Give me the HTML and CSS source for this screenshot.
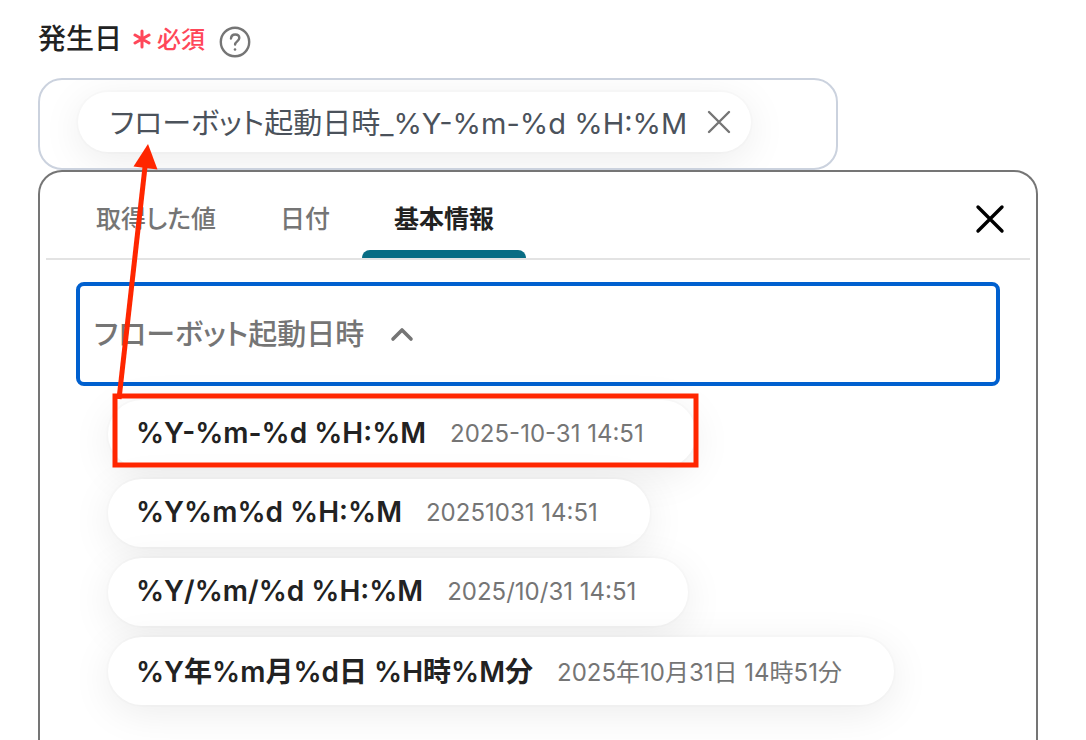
FILE: index.html
```html
<!DOCTYPE html>
<html lang="ja">
<head>
    <meta charset="UTF-8">
    <meta name="viewport" content="width=device-width, initial-scale=1.0">
    <title>発生日</title>
    <link rel="stylesheet" href="styles.css">
</head>
<body>
    <main>
        <div class="field-label">
            <span class="name">発生日</span>
            <span class="required">
                <svg width="18" height="20" viewBox="0 0 18 20"><path d="M9 2v16M2 6l14 8M16 6l-14 8" stroke="currentColor" stroke-width="3" stroke-linecap="round"/></svg>
                必須
            </span>
            <button type="button" class="help" aria-label="ヘルプ">
                <svg width="32" height="32" viewBox="0 0 32 32" fill="none" stroke="currentColor" stroke-width="2.400" stroke-linecap="round" stroke-linejoin="round">
                    <circle cx="16" cy="16" r="14.200"/>
                    <path d="M12 12.500c.2-2.500 1.900-4 4.200-4 2.400 0 4.100 1.500 4.100 3.600 0 3.200-4.200 3.400-4.200 6.500"/>
                    <circle cx="16" cy="23.500" r="1.300" fill="currentColor" stroke="none"/>
                </svg>
            </button>
        </div>

        <div class="value-box">
            <div class="chip">
                <span>フローボット起動日時_%Y-%m-%d %H:%M</span>
                <button type="button" aria-label="削除">
                    <svg width="24" height="24" viewBox="0 0 24 24"><path d="M2 2l20 20M22 2L2 22" stroke="currentColor" stroke-width="2.400" stroke-linecap="round"/></svg>
                </button>
            </div>
        </div>

        <section class="panel">
            <div class="panel-head">
                <div class="tabs" role="tablist">
                    <button type="button" role="tab">取得した値</button>
                    <button type="button" role="tab">日付</button>
                    <button type="button" role="tab" class="active" aria-selected="true">基本情報</button>
                </div>
                <button type="button" class="close" aria-label="閉じる">
                    <svg width="30" height="30" viewBox="0 0 30 30"><path d="M3 3l24 24M27 3L3 27" stroke="currentColor" stroke-width="3.400" stroke-linecap="round"/></svg>
                </button>
            </div>

            <button type="button" class="group" aria-expanded="true">
                <span>フローボット起動日時</span>
                <svg width="24" height="16" viewBox="0 0 24 16"><path d="M3 13l9-9 9 9" fill="none" stroke="currentColor" stroke-width="3.600" stroke-linecap="round" stroke-linejoin="round"/></svg>
            </button>

            <div class="options">
                <button type="button" class="option"><b>%Y-%m-%d %H:%M</b><span>2025-10-31 14:51</span></button>
                <button type="button" class="option"><b>%Y%m%d %H:%M</b><span>20251031 14:51</span></button>
                <button type="button" class="option"><b>%Y/%m/%d %H:%M</b><span>2025/10/31 14:51</span></button>
                <button type="button" class="option"><b>%Y年%m月%d日 %H時%M分</b><span>2025年10月31日 14時51分</span></button>
            </div>
        </section>

        <!-- Annotation: selected format goes to the field above -->
        <svg class="annotation" width="720" height="480" viewBox="0 0 720 480">
            <rect x="115" y="396" width="581" height="69" fill="none" stroke="#ff2600" stroke-width="5"/>
            <path d="M119 399L145 167" stroke="#ff2600" stroke-width="5"/>
            <path d="M148 144l-14.500 22.500 24 3z" fill="#ff2600"/>
        </svg>
    </main>
</body>
</html>
```
FILE: styles.css
```css
* {
    box-sizing: border-box;
}
body {
    margin: 0;
    background-color: #fff;
    color: #222;
    font-family: Inter, "Noto Sans CJK JP", sans-serif;
    font-feature-settings: "palt";
}
button {
    padding: 0;
    background: none;
    border: none;
    color: inherit;
    font: inherit;
    font-feature-settings: inherit;
    cursor: pointer;
}
svg {
    display: block;
}
main {
    position: relative;
    display: flex;
    flex-direction: column;
    min-height: 100vh;
    padding: 16px 48px 0 38px;
}
.field-label {
    display: flex;
    align-items: center;
    height: 42px;
    margin-bottom: 20px;
}
.name {
    font-size: 28px;
    font-weight: 500;
}
.required {
    display: flex;
    align-items: center;
    gap: 6px;
    margin: 0 14px 0 11px;
    color: #ff4759;
    font-size: 24px;
    font-weight: 500;
}
.required svg {
    margin-top: 4px;
}
.help {
    padding-top: 10px;
    color: #757575;
}
.value-box {
    display: flex;
    align-items: center;
    width: 80%;
    height: 92px;
    padding: 0 38px;
    border: 2px solid #cbd2de;
    border-radius: 24px;
    overflow: hidden;
}
.chip {
    display: flex;
    align-items: center;
    gap: 20px;
    height: 60px;
    margin-bottom: 4px;
    padding: 0 20px 0 32px;
    border-radius: 30px;
    background: #fff;
    box-shadow: 0 0 0 2px rgba(0, 0, 0, 0.01), 0 8px 40px rgba(0, 0, 0, 0.08);
    color: #4b525b;
    font-size: 29px;
    white-space: nowrap;
}
.chip span,
.option b,
.option span {
    padding-bottom: 2px;
}
.chip button {
    color: #757575;
}
.panel {
    flex: 1;
    padding: 0 6px 32px;
    border: 2px solid #757575;
    border-bottom: none;
    border-radius: 24px 24px 0 0;
}
.panel-head {
    display: flex;
    align-items: center;
    justify-content: space-between;
    height: 88px;
    padding: 0 25px 0 18px;
    border-bottom: 2px solid #e3e3e3;
}
.tabs {
    display: flex;
    height: 100%;
}
.tabs button {
    padding: 4px 32px 0;
    color: #757575;
    font-size: 25px;
    font-weight: 500;
}
.tabs .active {
    position: relative;
    color: #222;
    font-weight: 700;
}
.tabs .active::after {
    content: "";
    position: absolute;
    left: 0;
    right: 0;
    bottom: 0;
    height: 8px;
    border-radius: 8px 8px 0 0;
    background: #086d84;
}
.close {
    margin-top: 8px;
    color: #000;
}
.group {
    display: flex;
    align-items: center;
    gap: 26px;
    width: calc(100% - 60px);
    height: 104px;
    margin: 22px 30px 14px;
    padding: 0 14px;
    border: 4px solid #0060cf;
    border-radius: 8px;
    color: #757575;
    font-size: 29px;
    font-weight: 500;
}
.group span {
    padding-bottom: 4px;
}
.options {
    display: flex;
    flex-direction: column;
    align-items: flex-start;
    gap: 11px;
    padding-left: 62px;
}
.option {
    display: flex;
    align-items: center;
    gap: 24px;
    height: 68px;
    padding: 0 52px 0 28px;
    border-radius: 36px;
    background: #fff;
    box-shadow: 0 0 0 2px rgba(0, 0, 0, 0.01), 0 8px 40px rgba(0, 0, 0, 0.08);
    white-space: nowrap;
}
.option b {
    font-size: 28px;
    font-weight: 600;
}
.option span {
    color: #757575;
    font-size: 24px;
}
.annotation {
    position: absolute;
    top: 0;
    left: 0;
    pointer-events: none;
}
```
